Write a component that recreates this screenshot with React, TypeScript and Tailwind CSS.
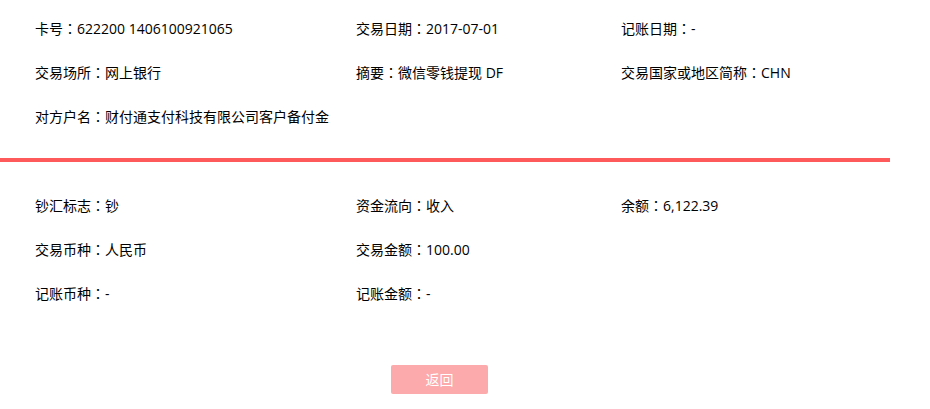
const top = [
  ["卡号", "622200 1406100921065"],
  ["交易日期", "2017-07-01"],
  ["记账日期", "-"],
  ["交易场所", "网上银行"],
  ["摘要", "微信零钱提现 DF"],
  ["交易国家或地区简称", "CHN"],
  ["对方户名", "财付通支付科技有限公司客户备付金"],
];

const bottom = [
  ["钞汇标志", "钞"],
  ["资金流向", "收入"],
  ["余额", "6,122.39"],
  ["交易币种", "人民币"],
  ["交易金额", "100.00"],
  ["", ""],
  ["记账币种", "-"],
  ["记账金额", "-"],
];

function Fields({ items }: { items: string[][] }) {
  return (
    <div className="grid grid-cols-[321px_265px_1fr] pl-[35px]">
      {items.map(([label, value], i) => (
        <div key={i} className="h-[44px] flex items-center whitespace-nowrap">
          {label && (
            <span>
              {label}
              <span className="font-['Noto_Sans_CJK_TC',sans-serif]">：</span>
              {value}
            </span>
          )}
        </div>
      ))}
    </div>
  );
}

export default function App() {
  return (
    <div className="w-[930px] h-[409px] bg-white text-[14px] text-black font-['Open_Sans','Noto_Sans_CJK_SC',sans-serif]">
      <div className="pt-[6px]">
        <Fields items={top} />
      </div>
      <div className="mt-[20px] w-[890px] h-[4px] bg-[#fe5a5c]" />
      <div className="pt-[21px]">
        <Fields items={bottom} />
      </div>
      <div className="pl-[391px] mt-[50px]">
        <button
          type="button"
          className="w-[97px] h-[29px] rounded-[2px] bg-[#fcaaab] text-white text-[14px]"
        >
          返回
        </button>
      </div>
    </div>
  );
}
